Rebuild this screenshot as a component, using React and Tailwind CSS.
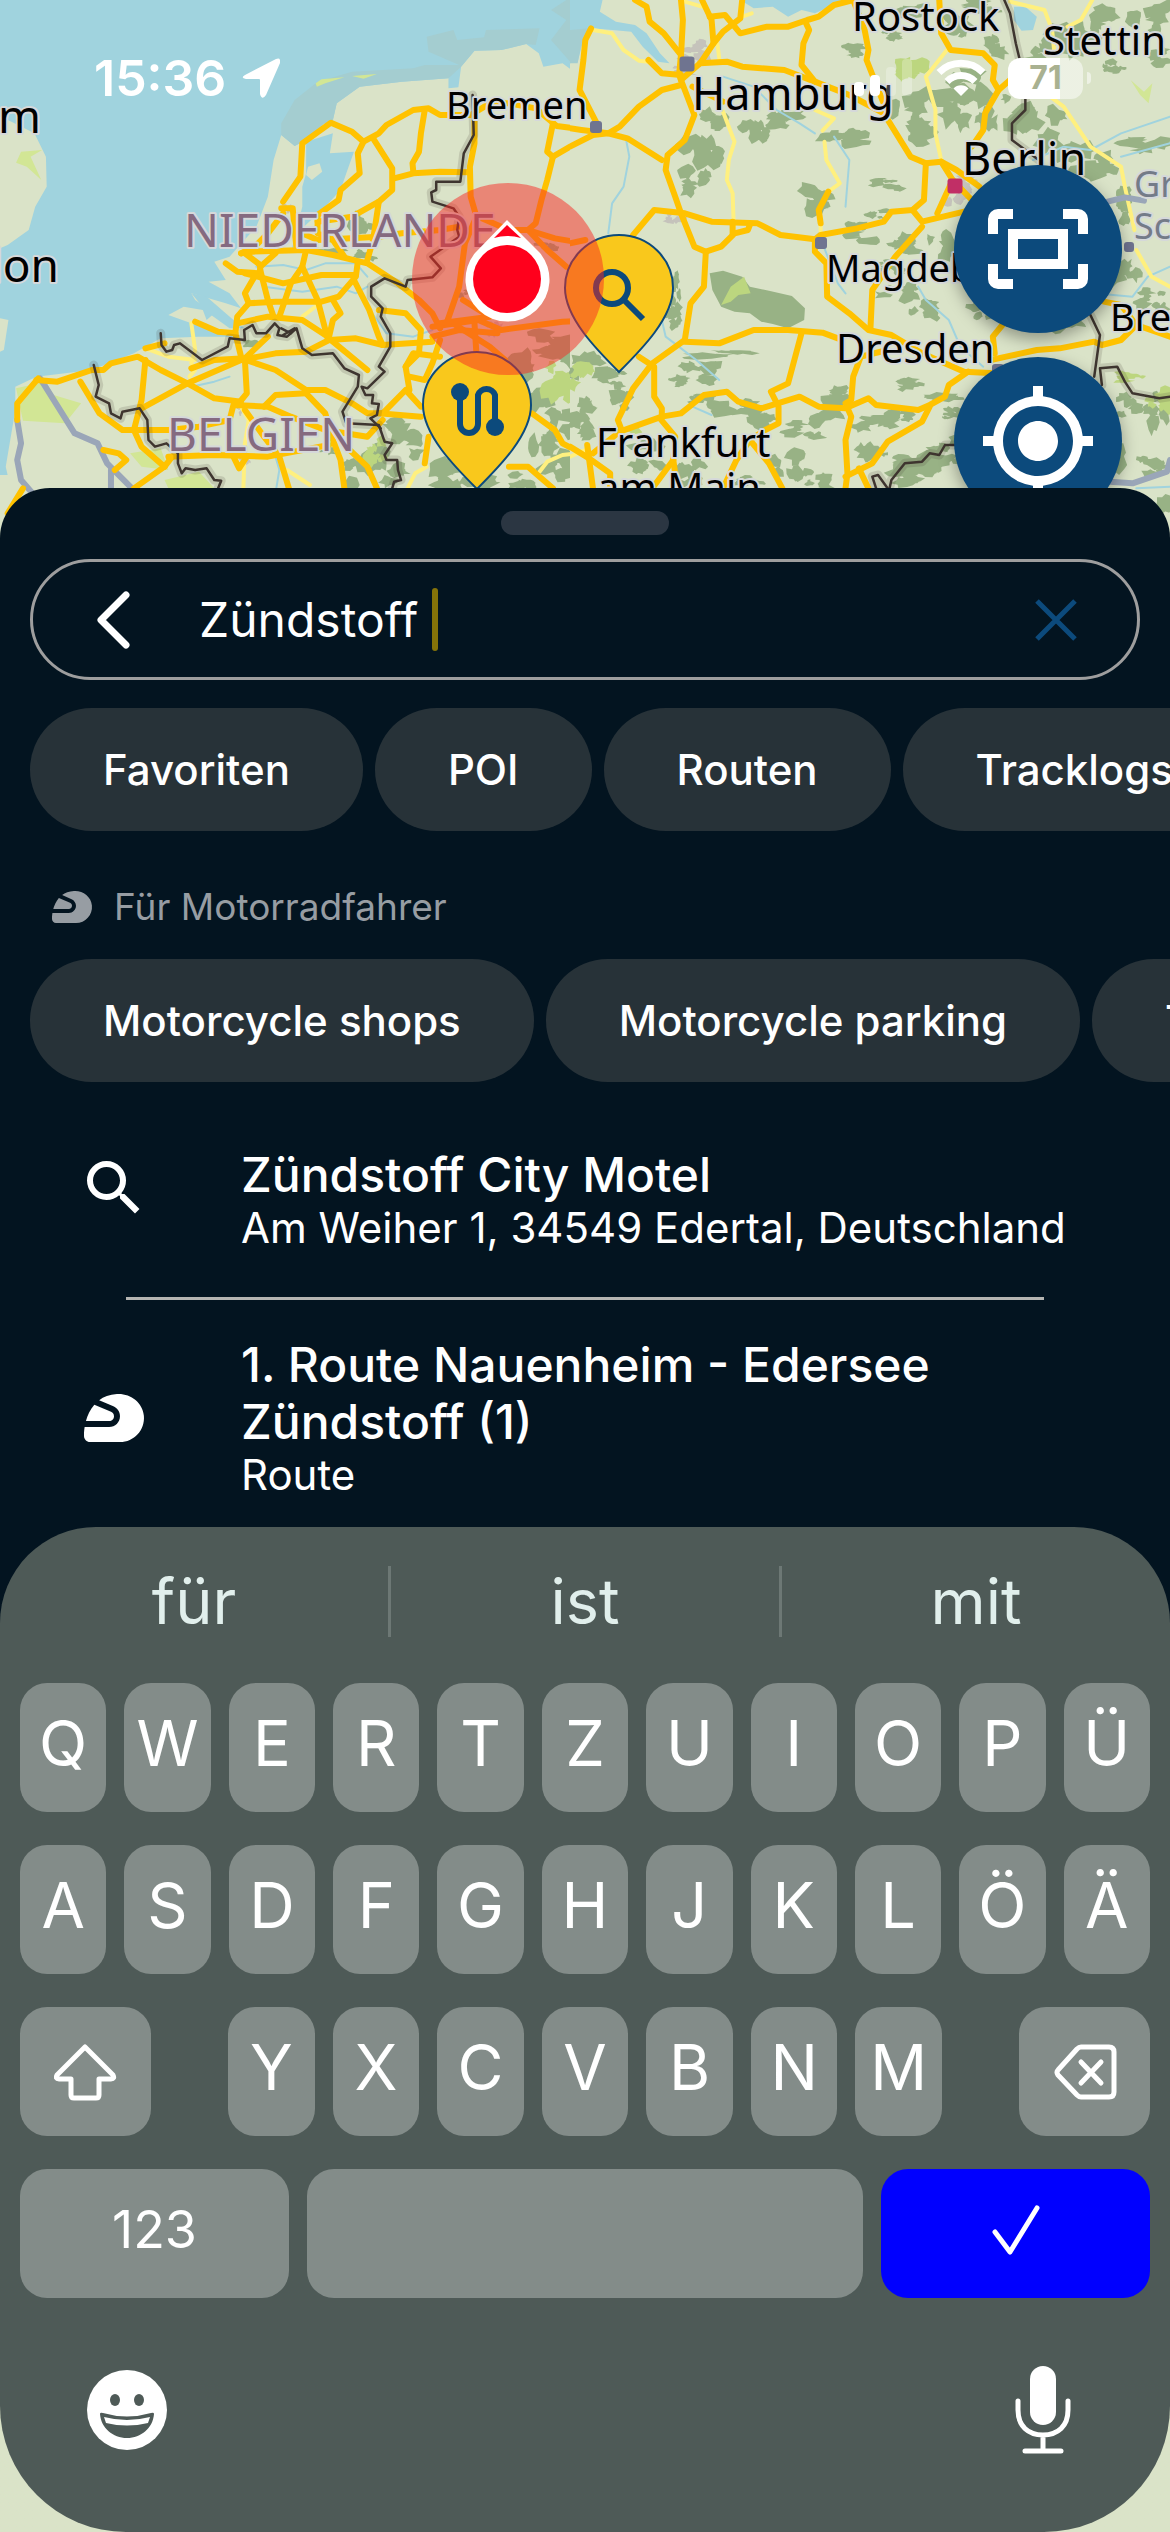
import React, { useState } from "react";
import { MdMyLocation, MdSearch, MdSportsMotorsports } from "react-icons/md";

const filters = ["Favoriten", "POI", "Routen", "Tracklogs"];
const riderFilters = ["Motorcycle shops", "Motorcycle parking", "Tankstellen"];

const results = [
  {
    title: "Zündstoff City Motel",
    subtitle: "Am Weiher 1, 34549 Edertal, Deutschland",
    icon: MdSearch,
    align: "items-start",
  },
  {
    title: "1. Route Nauenheim - Edersee Zündstoff (1)",
    subtitle: "Route",
    icon: MdSportsMotorsports,
    align: "items-center",
  },
];

const suggestions = ["für", "ist", "mit"];
const topRow = ["Q", "W", "E", "R", "T", "Z", "U", "I", "O", "P", "Ü"];
const homeRow = ["A", "S", "D", "F", "G", "H", "J", "K", "L", "Ö", "Ä"];
const bottomRow = ["Y", "X", "C", "V", "B", "N", "M"];

// Map tiles, every tile has its own 1568 x 1635 grid
const westTile = {
  water: [
    "0,0 1568,0 1568,80 1525,70 1500,110 1510,180 1500,215 1470,190 1420,200 1408,160 1375,132 1310,150 1240,152 1205,200 1198,262 1172,265 1172,235 1050,245 940,260 880,310 870,360 845,372 800,420 770,438 735,405 715,480 700,590 670,680 600,770 560,785 590,840 545,845 600,880 630,925 590,910 500,880 510,900 560,940 540,960 530,930 480,920 440,945 500,970 580,1000 610,1010 520,1010 420,1015 350,1060 240,1110 95,1130 40,1160 40,1230 15,1400 20,1425 0,1425",
    "800,425 870,400 862,460 925,455 905,520 890,570 850,620 790,685 760,760 790,620 790,560 800,520",
    "500,880 540,890 620,970 640,985 600,985 540,935",
  ],
  shallows: [
    "1115,110 1185,90 1195,120 1265,112 1270,90 1410,85 1400,135 1375,132 1310,150 1240,152 1205,200 1172,235 1050,245 940,260 880,310 870,360 845,372 800,420 770,438 735,405 735,370 770,300 830,245 920,215 1080,205 1110,195 1200,195 1120,155",
    "1480,0 1568,0 1568,70 1525,70 1500,110 1505,205 1440,120 1480,60 1440,30",
  ],
  islands: [
    "0,350 30,365 90,400 120,470 122,560 92,620 75,690 20,735 0,745",
    "0,955 22,960 10,1050 0,1055",
    "805,500 835,490 842,515 815,540 800,525",
  ],
  meadow: [
    "825,250 840,238 900,232 850,250 828,260",
    "920,228 985,222 950,236",
    "55,455 110,450 80,470 108,540 70,500 42,488",
    "42,1165 120,1145 140,1185 212,1210 170,1270 60,1262",
    "340,1360 420,1345 440,1410 370,1400",
    "430,1440 520,1415 560,1465 440,1465",
  ],
  forest: [
    [945, 675, 38, 40], [960, 765, 34, 20], [870, 752, 36, 12], [665, 1030, 26, 12],
    [1040, 1320, 60, 60], [1020, 1420, 50, 40], [930, 1420, 50, 60], [1180, 1420, 60, 50], [1250, 1440, 50, 30],
    [1430, 1040, 90, 50], [1380, 1100, 50, 60], [1510, 1060, 60, 60], [1430, 1210, 60, 50], [1540, 1170, 40, 60],
    [1500, 1270, 60, 50], [1420, 1300, 40, 60], [1480, 1400, 60, 50], [1380, 1440, 40, 24],
    [1210, 880, 14, 12], [1430, 740, 30, 14], [850, 1350, 24, 12],
  ],
  lightForest: [[1460, 1150, 50, 60], [980, 1350, 26, 34], [1540, 1110, 26, 30]],
  urban: [[625, 1225, 16, 24], [750, 630, 14, 16], [640, 1385, 18, 12], [1290, 990, 20, 20]],
  rivers: [
    "670,800 740,795 800,810 850,790 930,790 960,830",
    "690,860 790,875 880,860 930,880 960,860",
    "960,920 985,960 1010,1000 1080,1010 1130,990",
    "500,1160 560,1145 600,1130",
    "720,1370 730,1410 722,1465",
  ],
  minor: [
    "500,970 510,1050 500,1090 510,1110 495,1130",
    "380,1045 440,1070 510,1080",
    "790,950 830,915",
    "630,1220 650,1260 640,1330 636,1465",
    "750,1410 810,1455",
    "1065,1465 1085,1420 1115,1400",
    "1410,1415 1430,1385 1470,1365 1510,1360",
  ],
  roads: [
    "740,605 785,530 790,430 865,368 920,395 950,425 935,460 940,520 890,570 885,600 830,645",
    "950,425 990,400 1010,375 1080,330 1120,325 1150,345 1230,345 1280,310 1330,310 1400,325 1455,378 1500,385 1568,410",
    "1445,370 1430,455 1445,470 1490,440 1568,405",
    "975,415 1025,505 1025,570 990,605 920,650 830,665",
    "1110,330 1100,400 1095,455 1078,490 1080,515",
    "1030,535 1080,520 1150,515 1225,517",
    "1240,350 1240,430 1228,500 1230,590 1245,650 1215,730 1200,860 1170,960",
    "1445,470 1430,540 1415,600 1400,670 1380,690 1450,715 1500,725 1568,710",
    "1545,85 1530,120 1525,190 1512,230 1515,290 1555,370",
    "735,625 765,625 770,690 775,745",
    "740,640 700,700 670,735 630,760",
    "990,605 975,720 960,780",
    "630,760 660,755 800,750 870,765 960,790 1040,850 1095,900 1130,940 1150,985",
    "590,790 620,815 680,820 680,795 640,760",
    "680,800 720,760",
    "800,750 790,800 830,900 855,1010",
    "790,800 760,850 730,950",
    "640,820 740,850 840,825 930,825",
    "680,810 700,900 715,950",
    "665,830 640,880 650,910 620,950 615,1000",
    "650,910 720,905 840,905 885,890 930,830 935,785",
    "870,900 890,940 870,960 860,1010",
    "925,840 965,930 990,1010 1000,1035",
    "510,965 570,995 615,1000",
    "620,970 700,950 790,960 850,1005 870,1025 960,1110",
    "830,645 830,700 870,720 900,770",
    "770,690 830,720 990,710 1050,700 1150,690 1200,680",
    "380,1045 430,1030",
    "95,1140 150,1145 240,1110 270,1110 290,1090 360,1070 420,1110 490,1150 560,1195 630,1205",
    "45,1260 45,1210 100,1135",
    "490,1150 630,1080 720,1060 800,1055 860,1020 930,1015 1000,1035 1130,1025",
    "630,1075 720,1110 800,1170 850,1170 920,1210 960,1240 1000,1240",
    "380,1080 370,1200 350,1290 370,1340 430,1400",
    "370,1225 490,1150",
    "640,1080 645,1180 620,1215",
    "500,1105 560,1080 640,1075 700,1010",
    "615,1000 630,1070",
    "210,1145 260,1240 320,1290 440,1290 520,1280 600,1260 610,1215 700,1220 760,1250 850,1290 960,1310 1000,1260",
    "690,1220 720,1185 800,1180",
    "640,1230 690,1310 730,1370 755,1465",
    "440,1370 560,1365 700,1370 860,1335",
    "350,1465 430,1400 450,1370",
    "800,1180 850,1240 870,1320 890,1380 900,1465",
    "990,1240 1100,1250",
    "900,1335 960,1400 985,1465",
    "1000,1240 1060,1170 1100,1220",
    "990,930 1060,940 1100,990 1095,1060 1060,1100 1070,1170",
    "1060,1100 1080,1060 1150,1070",
    "1070,1130 1110,1140 1130,1090 1150,1020",
    "1130,980 1250,960 1310,990 1470,965 1568,960",
    "1130,1010 1200,990 1300,1000",
    "1170,960 1280,1040 1320,1080",
    "1240,970 1245,1060",
    "1150,970 1280,950 1210,900",
    "1250,650 1330,690 1380,690",
    "1380,690 1430,750 1480,800",
    "1390,1240 1450,1290 1470,1330 1520,1360 1568,1390",
    "1540,1340 1545,1465",
    "1110,1390 1120,1310",
    "1330,1400 1380,1400 1410,1430 1445,1465",
    "270,1350 310,1360 330,1380 300,1410",
    "610,1370 625,1405 645,1370",
    "60,1465 20,1540",
  ],
  foreign: [
    "105,1135 195,1300 255,1330 280,1390 345,1465",
    "45,1260 55,1330 45,1380 55,1440 100,1500",
    "290,1410 290,1465",
  ],
  borders: [
    "420,1000 422,1035 435,1055 450,1050 455,1035 470,1030 528,1080 595,1040 600,1015 640,1020 638,990 660,975 670,1000 695,1000 718,970 730,985 725,1005 750,1010 775,985 790,1045 815,1065 870,1060 900,1105 938,1125 935,1160 895,1235 905,1270 990,1275 1005,1325 1025,1330 1005,1365 1010,1380 1038,1380 1040,1410 1048,1440 1030,1445 1025,1465",
    "1235,285 1238,405 1212,460 1203,545 1140,545 1140,570 1127,577 1130,605 1185,625 1200,650 1195,690 1200,710 1125,770 1152,805 1130,832 1065,840 1060,860 1005,835 970,860 970,890 1000,925 995,950 1020,1000 1020,1040 990,1100 1005,1115 960,1165 945,1160 955,1185 975,1185 972,1210 990,1212 985,1245 968,1255 995,1285",
    "245,1095 258,1155 250,1190 285,1210 290,1240 315,1255 320,1235 365,1225 385,1260 388,1320 405,1340 435,1330 465,1360 465,1390 475,1420 485,1405 510,1410 540,1405 560,1440 578,1442 570,1465",
    "735,985 760,1000 770,985 740,1005",
  ],
};

const eastTile = {
  water: [
    "0,0 85,0 78,35 120,65 170,75 200,100 235,160 260,190 230,185 190,140 160,95 110,90 55,85 35,120 20,185 0,190",
    "445,0 740,0 690,15 640,40 605,30 570,50 530,20 480,25",
    "1160,20 1190,20 1220,50 1210,90 1180,92 1160,60",
  ],
  shallows: ["0,90 50,85 30,130 20,190 0,190"],
  islands: [],
  meadow: ["1465,240 1500,275 1522,250 1512,310 1490,285"],
  forest: [
    [340, 450, 60, 60], [330, 540, 40, 40], [370, 370, 40, 40], [480, 390, 40, 40], [570, 360, 50, 26],
    [700, 410, 60, 30], [740, 150, 46, 22], [900, 40, 60, 24], [1010, 60, 50, 50], [1100, 130, 40, 40],
    [1060, 20, 60, 20], [840, 110, 30, 16], [870, 330, 60, 70], [1010, 250, 70, 60], [900, 400, 50, 40],
    [1000, 330, 40, 60], [1090, 330, 40, 60], [1230, 380, 60, 60], [1320, 480, 70, 50], [1300, 130, 60, 60],
    [1500, 60, 60, 60], [1400, 60, 40, 40], [1220, 160, 40, 40], [1420, 200, 30, 20], [1500, 430, 70, 30],
    [640, 600, 50, 46], [835, 550, 40, 18], [760, 700, 60, 34], [800, 640, 30, 16], [850, 880, 50, 30],
    [920, 930, 40, 30], [970, 760, 40, 60], [880, 730, 50, 30], [1080, 930, 30, 30], [1360, 860, 60, 40],
    [1440, 800, 50, 50], [1520, 900, 40, 30], [1290, 960, 60, 30], [280, 870, 18, 50], [270, 960, 24, 40],
    [60, 1090, 60, 40], [120, 1140, 50, 30], [150, 1190, 40, 40], [60, 1220, 40, 40], [30, 1270, 34, 40],
    [330, 1120, 44, 30], [400, 1060, 80, 14], [430, 1220, 60, 30], [500, 1260, 40, 34], [340, 1190, 40, 20],
    [300, 1140, 40, 20], [660, 1230, 60, 40], [610, 1290, 50, 24], [570, 1400, 50, 50], [640, 1440, 40, 30],
    [300, 1420, 50, 40], [210, 1410, 40, 30], [470, 1440, 40, 20], [800, 1270, 50, 26], [860, 1250, 40, 24],
    [790, 1350, 40, 30], [920, 1400, 80, 40], [980, 1350, 60, 40], [1000, 1240, 34, 20], [900, 1150, 40, 20],
    [960, 1190, 50, 16], [690, 1180, 30, 20], [1480, 1220, 50, 40], [1420, 1350, 40, 60], [1520, 1400, 40, 30],
    [1540, 1240, 26, 60], [1550, 1540, 30, 40], [200, 1330, 40, 20], [860, 1440, 50, 26], [830, 800, 40, 20],
    [1180, 330, 50, 50], [1390, 500, 50, 40], [1520, 160, 40, 30], [1360, 110, 40, 60], [1450, 620, 30, 60],
  ],
  lightForest: [[880, 220, 44, 40], [30, 1130, 36, 44], [1540, 1200, 40, 40], [1470, 1130, 40, 16], [160, 1290, 20, 14]],
  urban: [[320, 160, 34, 34], [300, 210, 40, 16], [1010, 570, 50, 44], [275, 650, 26, 20], [1050, 540, 30, 20]],
  rivers: [
    "145,410 155,470 140,560 110,610 100,700",
    "400,230 480,260 540,330 600,370 640,400",
    "690,410 730,480 720,620",
    "650,700 680,790 700,850 720,880",
    "910,860 930,900 990,960 1020,1040 1080,1100",
    "1210,480 1290,440 1360,450 1440,400 1568,350",
    "1440,470 1568,430",
    "240,960 250,1010 330,1080 390,1140",
    "320,1220 370,1245",
    "1370,880 1470,890 1510,830 1568,800",
    "1480,1465 1568,1460",
  ],
  minor: [
    "60,90 110,100 140,150 180,182 205,185",
    "400,335 430,425 415,480 410,540 425,580 428,680",
    "640,330 690,355 660,392",
    "665,425 670,480 705,550 675,575",
    "655,650 655,700",
    "985,150 930,230 955,330 955,400 970,480",
    "1255,290 1290,320 1360,440 1440,500 1450,560 1475,690",
    "1480,750 1520,830 1568,860",
    "1150,5 1240,30 1260,90 1265,150",
    "1365,0 1335,60 1300,80",
    "385,130 390,175",
    "300,5 345,20",
    "450,50 475,40",
    "0,1370 40,1350",
  ],
  roads: [
    "170,0 200,20 208,65 245,100 290,165 285,225 325,345 300,420 255,465 250,510 275,590 290,640 325,740 355,755 350,860 315,910 300,1020 215,1090 165,1165 125,1260 135,1290 60,1360",
    "290,0 295,60 290,170",
    "345,0 370,60 375,130 340,190 290,240",
    "450,0 445,55 400,95 375,130",
    "365,50 405,45 445,100 515,80 570,80 620,60 650,50 690,15 740,0",
    "615,65 625,90 610,130 605,195 640,245 730,285 820,340 890,470 930,490 970,485 1010,510 1070,560",
    "340,190 410,185 450,200 560,210 640,245",
    "205,180 240,220 290,225",
    "290,255 240,270 180,320 130,380 100,400 30,390 0,385",
    "320,260 400,305",
    "0,440 60,405 100,400 150,415 240,480",
    "55,85 40,120 35,180 25,270 70,370",
    "740,0 770,90 780,150 775,180 830,340",
    "965,0 970,100 995,150 1080,160 1110,195 1105,240 1120,270 1085,340 1080,390 1050,440",
    "1120,270 1150,240",
    "930,490 925,600 895,630 840,635 820,665 750,685 655,705 640,718 550,705 490,670 370,665 300,640 220,630 165,705",
    "895,630 920,665 1030,635",
    "1000,540 960,640",
    "970,485 1000,540 1050,600",
    "920,680 850,770 790,870 785,990",
    "640,720 640,755 670,790 672,890 730,940 780,990 840,1005 920,1060 1030,1115 1110,1120",
    "300,1025 390,1030 480,990 570,990 660,998 700,1015",
    "605,1000 570,1150 525,1175 545,1220 545,1270 510,1290 470,1320",
    "830,1050 760,1070 740,1130 735,1200 720,1210 735,1250 720,1320 725,1420 720,1465",
    "180,1070 220,1100 220,1190 240,1225 240,1250",
    "130,1295 240,1250 290,1240 350,1185 410,1175 440,1205 500,1225 600,1190 650,1220 720,1225 780,1195 800,1215 910,1230 940,1215 980,1190 990,1155 1040,1115",
    "940,1220 920,1265 830,1325 790,1390 720,1430",
    "755,1405 780,1465",
    "1100,1080 1140,1070 1220,1050 1280,1045 1370,1025 1390,1035 1440,1020 1480,975 1568,1010",
    "1110,1060 1105,1010 1130,975",
    "1395,905 1440,915 1480,975",
    "235,1255 275,1310 270,1380 215,1465",
    "270,1380 280,1465",
    "470,1320 520,1390 555,1465",
    "470,1320 435,1380 400,1465",
    "0,1340 50,1375 105,1420 105,1465",
    "45,1335 60,1465",
    "355,755 395,740 430,700 465,690 470,675",
    "425,665 425,700",
    "675,575 650,630 655,670",
    "0,730 40,720",
  ],
  foreign: ["1410,1445 1470,1450 1560,1415 1568,1380", "1405,605 1450,592 1500,602"],
  borders: [
    "1135,0 1150,40 1165,130 1190,250 1190,330 1155,370 1155,420 1225,480",
    "1360,945 1385,1005 1370,1130",
    "1390,1155 1385,1105 1430,1100 1450,1145 1470,1180 1540,1195 1568,1190",
    "1005,1335 980,1335 965,1365 940,1360 920,1385 875,1390 840,1440 835,1465",
    "830,1465 805,1425 790,1430 800,1465",
  ],
};

const places = [
  { name: "Bremen", x: 446, y: 119, size: 38 },
  { name: "Hamburg", x: 692, y: 110, size: 45 },
  { name: "Rostock", x: 852, y: 31, size: 40 },
  { name: "Stettin", x: 1043, y: 55, size: 40 },
  { name: "Berlin", x: 962, y: 175, size: 45 },
  { name: "Magdeburg", x: 826, y: 282, size: 38 },
  { name: "Dresden", x: 836, y: 363, size: 40 },
  { name: "Breslau", x: 1110, y: 331, size: 38 },
  { name: "Frankfurt", x: 596, y: 457, size: 40 },
  { name: "am Main", x: 597, y: 502, size: 40 },
];

const cities = [
  { x: 596, y: 127, size: 12, color: "#6f7490" },
  { x: 687, y: 64, size: 15, color: "#6f7490" },
  { x: 821, y: 243, size: 12, color: "#6f7490" },
  { x: 955, y: 186, size: 15, color: "#c12f66" },
  { x: 1129, y: 247, size: 10, color: "#6f7490" },
  { x: 998, y: 370, size: 12, color: "#6f7490" },
];

const noise = (n) => {
  const v = Math.sin(n * 12.9898) * 43758.5453;
  return v - Math.floor(v);
};

// Cluster of ragged pieces round a centre, the same for the same input
function patch([cx, cy, rx, ry]) {
  let d = "";
  for (let piece = 0; piece < 6; piece++) {
    const seed = cx * 3 + cy * 7 + piece * 31;
    const px = cx + (noise(seed) - 0.5) * rx * 1.6;
    const py = cy + (noise(seed + 1) - 0.5) * ry * 1.6;
    const scale = 0.3 + noise(seed + 2) * 0.45;
    for (let i = 0; i < 11; i++) {
      const angle = ((i + noise(seed + i * 5) * 0.7) / 11) * Math.PI * 2;
      const r = scale * (0.45 + noise(seed + i * 9 + 4) * 0.75);
      const x = Math.round(px + Math.cos(angle) * rx * r);
      const y = Math.round(py + Math.sin(angle) * ry * r);
      d += `${i === 0 ? "M" : "L"}${x} ${y}`;
    }
    d += "Z";
  }
  return d;
}

const Areas = ({ shapes, fill }) =>
  shapes.map((points, i) => <polygon key={i} points={points} fill={fill} />);

const Patches = ({ shapes, fill }) => (
  <path d={shapes.map(patch).join("")} fill={fill} />
);

const Lines = ({ shapes, color, width, opacity = 1 }) => (
  <g
    fill="none"
    stroke={color}
    strokeWidth={width}
    strokeLinejoin="round"
    strokeLinecap="round"
    opacity={opacity}
  >
    {shapes.map((points, i) => (
      <polyline key={i} points={points} vectorEffect="non-scaling-stroke" />
    ))}
  </g>
);

const Tile = ({ x, data, children }) => (
  <svg
    x={x}
    y="0"
    width="600"
    height="545"
    viewBox="0 0 1568 1635"
    preserveAspectRatio="none"
  >
    <rect width="1568" height="1635" fill="#dae3c8" />
    <Areas shapes={data.water} fill="#a0d3de" />
    <Areas shapes={data.shallows} fill="#a4cdd0" />
    <Areas shapes={data.islands} fill="#dae3c8" />
    <Areas shapes={data.meadow} fill="#d2e695" />
    {children}
    <Patches shapes={data.forest} fill="#98b285" />
    <Patches shapes={data.lightForest} fill="#bcd67f" />
    <Patches shapes={data.urban} fill="#c5c3bb" />
    <Lines shapes={data.rivers} color="#a0d3de" width={2} />
    <Lines shapes={data.minor} color="#fff07f" width={4} />
    <Lines shapes={data.foreign} color="#9aa6b8" width={6} />
    <Lines shapes={data.roads} color="#ffc200" width={6} />
    <Lines shapes={data.borders} color="#3e352f" width={9} opacity={0.15} />
    <Lines shapes={data.borders} color="#3e352f" width={2.5} />
  </svg>
);

const Pin = ({ x, y, children }) => (
  <g transform={`translate(${x} ${y})`}>
    <path
      d="M0 0C-22 -22 -54 -54 -54 -84A54 53 0 0 1 54 -84C54 -54 22 -22 0 0Z"
      fill="#f9c81c"
      stroke="#0c4a7c"
      strokeWidth="2"
    />
    {children}
  </g>
);

const RouteMap = () => (
  <svg
    className="absolute inset-0 w-full h-full"
    viewBox="0 0 1170 545"
    preserveAspectRatio="xMinYMin slice"
    fontFamily="'Noto Sans', sans-serif"
  >
    <Tile x={0} data={westTile} />
    <Tile x={570} data={eastTile}>
      {/* Harz */}
      <path
        d="M365 820L400 812L450 830L470 860L520 872L580 888L614 925L612 960L570 985L530 972L500 965L470 940L430 935L395 920L372 870Z"
        fill="#98b285"
      />
      <path d="M395 915L420 860L455 830L472 880L440 885L420 905Z" fill="#bcd67f" />
    </Tile>

    {cities.map((c) => (
      <rect
        key={c.x}
        x={c.x - c.size / 2}
        y={c.y - c.size / 2}
        width={c.size}
        height={c.size}
        rx="3"
        fill={c.color}
      />
    ))}

    <g stroke="#d5d8da" strokeWidth="4" strokeLinejoin="round" paintOrder="stroke">
      <text x="41" y="133" fontSize="46" textAnchor="end">
        Birmingham
      </text>
      <text x="59" y="282" fontSize="46" textAnchor="end">
        London
      </text>
      {places.map((p) => (
        <text key={p.name} x={p.x} y={p.y} fontSize={p.size}>
          {p.name}
        </text>
      ))}
      <g fontSize="36" fill="#747b88">
        <text x="1134" y="197">Grünberg</text>
        <text x="1134" y="239">Schlesien</text>
      </g>
      <g fontSize="46" fill="#856a80">
        <text x="184" y="247">NIEDERLANDE</text>
        <text x="167" y="451">BELGIEN</text>
      </g>
    </g>

    <Pin x={477} y={489}>
      <g fill="none" stroke="#0c4a7c" strokeWidth="6">
        <path d="M-17 -97V-65a9 9 0 0 0 18 0V-94a9 9 0 0 1 17 0V-62" />
      </g>
      <circle cx="-17" cy="-97" r="9" fill="#0c4a7c" />
      <circle cx="18" cy="-62" r="9" fill="#0c4a7c" />
    </Pin>
    <Pin x={619} y={372}>
      <g fill="none" stroke="#0c4a7c" strokeWidth="6">
        <circle cx="-7" cy="-84" r="16" />
        <path d="M5 -72L24 -53" />
      </g>
    </Pin>

    {/* Current position */}
    <circle cx="508" cy="279" r="96" fill="#f82a24" opacity="0.5" />
    <path d="M507 220L540 253A42 42 0 1 1 475 253Z" fill="#fff" />
    <path d="M507 225L521 238Q507 234 494 238Z" fill="#ff001c" />
    <circle cx="507" cy="279" r="34" fill="#ff001c" />
  </svg>
);

const StatusBar = () => (
  <div className="relative flex items-center justify-between pt-[50px] pl-[94px] pr-[79px] text-white">
    <div className="flex items-center gap-4">
      <span className="text-[50px] leading-[56px] font-semibold">15:36</span>
      <svg className="w-[38px] h-[40px]" viewBox="0 0 38 40" fill="currentColor">
        <path d="M3 17L34 1q5 -2 4 4L24 37q-4 6 -6 -1V22q0 -1 -1 -1H4q-6 -1 -1 -4z" />
      </svg>
    </div>
    <div className="flex items-center gap-[22px]">
      <svg className="w-[60px] h-[40px]" viewBox="0 0 60 40" fill="currentColor">
        <rect x="0" y="24" width="10" height="14" rx="4" />
        <rect x="16" y="17" width="10" height="21" rx="4" />
        <rect x="32" y="9" width="10" height="29" rx="4" opacity="0.25" />
        <rect x="48" y="1" width="10" height="37" rx="4" opacity="0.25" />
      </svg>
      <svg className="w-[50px] h-[38px]" viewBox="0 0 50 38" fill="none" stroke="currentColor" strokeWidth="7">
        <path d="M3 13.500a31 31 0 0 1 44 0" />
        <path d="M11 22.500a19.500 19.500 0 0 1 28 0" />
        <path d="M25 37l-7.500 -7.500a10.500 10.500 0 0 1 15 0z" fill="currentColor" stroke="none" />
      </svg>
      <div className="flex items-center gap-1">
        <div className="flex items-center justify-center w-[75px] h-[41px] rounded-xl bg-linear-to-r from-white from-70% to-white/50 to-70%">
          <span className="text-[32px] leading-[40px] font-bold text-[#a9b191]">71</span>
        </div>
        <div className="w-1 h-3 rounded-r-full bg-white/50" />
      </div>
    </div>
  </div>
);

const MapButton = ({ label, children }) => (
  <button
    type="button"
    aria-label={label}
    className="flex items-center justify-center size-[168px] rounded-full bg-[#0c4a7c] text-white shadow-[0_6px_16px_rgba(0,0,0,0.35)]"
  >
    {children}
  </button>
);

const Chips = ({ items }) => (
  <div className="flex gap-3 pl-[30px] overflow-hidden">
    {items.map((item) => (
      <button
        key={item}
        type="button"
        className="shrink-0 h-[123px] px-[73px] rounded-full bg-[#273238] text-[42px] leading-[50px] font-medium whitespace-nowrap"
      >
        {item}
      </button>
    ))}
  </div>
);

const Key = ({ label, className = "flex-1", children }) => (
  <button
    type="button"
    aria-label={label}
    className={`flex items-center justify-center min-w-0 h-[129px] pb-2 rounded-[27px] bg-[#838c89] text-[63px] text-white ${className}`}
  >
    {children}
  </button>
);

const Keyboard = () => (
  <div className="bg-linear-to-b from-[#031420] from-50% to-[#dae3c8] to-50%">
    <div className="pb-[78px] rounded-t-[96px] rounded-b-[126px] bg-[#4e5a57]">
      <div className="flex h-[156px] pt-[39px] pb-[46px] divide-x-3 divide-[#6d7875]">
        {suggestions.map((word) => (
          <button
            key={word}
            type="button"
            className="flex flex-1 items-center justify-center text-[63px] leading-[71px] text-[#e1efec]"
          >
            {word}
          </button>
        ))}
      </div>

      <div className="flex flex-col gap-[33px] px-5">
        <div className="flex gap-[18px]">
          {topRow.map((k) => (
            <Key key={k}>{k}</Key>
          ))}
        </div>
        <div className="flex gap-[18px]">
          {homeRow.map((k) => (
            <Key key={k}>{k}</Key>
          ))}
        </div>
        <div className="flex gap-[77px]">
          <Key label="Shift" className="w-[131px]">
            <svg className="w-[64px] h-[60px] mt-2" viewBox="0 0 64 60" fill="none" stroke="currentColor" strokeWidth="5" strokeLinejoin="round">
              <path d="M31 5L59 33q2 4 -2 4H45V53q0 3 -3 3H20q-3 0 -3 -3V37H5q-4 0 -2 -4z" />
            </svg>
          </Key>
          <div className="flex flex-1 gap-[18px]">
            {bottomRow.map((k) => (
              <Key key={k}>{k}</Key>
            ))}
          </div>
          <Key label="Löschen" className="w-[131px]">
            <svg className="w-[64px] h-[60px] mt-2" viewBox="0 0 64 60" fill="none" stroke="currentColor" strokeWidth="5" strokeLinejoin="round" strokeLinecap="round">
              <path d="M28 5H56q5 0 5 5V50q0 5 -5 5H28q-2 0 -4 -2L5 33q-2 -3 0 -5L24 7q2 -2 4 -2z" />
              <path d="M28 20L48 41M48 20L28 41" />
            </svg>
          </Key>
        </div>
        <div className="grid grid-cols-[269px_1fr_269px] gap-[18px]">
          <Key className="w-full">
            <span className="text-[52px]">123</span>
          </Key>
          <Key label="Leerzeichen" className="w-full" />
          <button
            type="button"
            aria-label="Fertig"
            className="flex items-center justify-center h-[129px] pb-2 rounded-[27px] bg-[#0000ff] text-white"
          >
            <svg className="w-[52px] h-[52px]" viewBox="0 0 52 52" fill="none" stroke="currentColor" strokeWidth="5" strokeLinecap="round" strokeLinejoin="round">
              <path d="M5 28L20 48L47 4" />
            </svg>
          </button>
        </div>
      </div>

      <div className="flex items-center justify-between pt-[66px] px-[84px] text-white">
        <button type="button" aria-label="Emoji">
          <svg className="size-[86px]" viewBox="0 0 86 86">
            <circle cx="43" cy="44" r="40" fill="currentColor" />
            <g fill="#4e5a57">
              <ellipse cx="31" cy="34" rx="5" ry="6" />
              <ellipse cx="55" cy="34" rx="5" ry="6" />
              <path d="M16 48q0 -2 3 -1q24 7 48 0q3 -1 3 1C69 62 57 72 43 72S17 62 16 48z" />
            </g>
            <path d="M20 51q23 6 46 0l-2 6q-21 5 -42 0z" fill="currentColor" />
          </svg>
        </button>
        <button type="button" aria-label="Diktieren">
          <svg className="w-[86px] h-[90px]" viewBox="0 0 86 90" fill="none" stroke="currentColor" strokeWidth="5" strokeLinecap="round">
            <rect x="30" y="2" width="26" height="59" rx="13" fill="currentColor" stroke="none" />
            <path d="M18 37V46C18 62 28 71 43 71S68 62 68 46V37M43 71V86M25 87H61" />
          </svg>
        </button>
      </div>
    </div>
  </div>
);

const App = () => {
  const [query, setQuery] = useState("Zündstoff ");

  return (
    <div className="min-h-screen flex flex-col overflow-hidden bg-[#dae3c8] font-['Inter',sans-serif]">
      <header className="relative h-[545px]">
        <RouteMap />
        <StatusBar />
        <div className="absolute top-[165px] right-12 flex flex-col gap-6">
          <MapButton label="Karte einpassen">
            <svg className="size-[120px]" viewBox="0 0 24 24" fill="none" stroke="currentColor" strokeWidth="2">
              <path d="M3 9V6a1 1 0 0 1 1 -1h3M17 5h3a1 1 0 0 1 1 1v3M21 15v3a1 1 0 0 1 -1 1h-3M7 19H4a1 1 0 0 1 -1 -1v-3" />
              <rect x="7" y="9" width="10" height="6" />
            </svg>
          </MapButton>
          <MapButton label="Mein Standort">
            <MdMyLocation className="size-[120px]" />
          </MapButton>
        </div>
      </header>

      {/* Search sheet */}
      <main className="relative flex-1 -mt-[57px] pt-[23px] pb-[26px] rounded-t-[50px] bg-[#031420] text-white">
        <div className="w-[168px] h-6 mx-auto rounded-full bg-[#2b3642]" />

        <div className="flex items-center h-[121px] mt-6 mx-[30px] pl-[62px] pr-[58px] border-3 border-[#9e9e9e] rounded-full">
          <button type="button" aria-label="Zurück">
            <svg className="w-[40px] h-[60px]" viewBox="0 0 40 60" fill="none" stroke="currentColor" strokeWidth="7" strokeLinecap="round" strokeLinejoin="round">
              <path d="M31 5L6 30L31 55" />
            </svg>
          </button>
          <input
            type="text"
            aria-label="Suche"
            value={query}
            onChange={(e) => setQuery(e.target.value)}
            className="[field-sizing:content] ml-[64px] text-[48px] leading-[60px] bg-transparent outline-none"
          />
          <span className="w-[6px] h-[63px] rounded-full bg-[#857309]" />
          <button type="button" aria-label="Eingabe löschen" className="ml-auto text-[#0c4a7c]">
            <svg className="size-[46px]" viewBox="0 0 46 46" fill="none" stroke="currentColor" strokeWidth="5">
              <path d="M4 4L42 42M42 4L4 42" />
            </svg>
          </button>
        </div>

        <div className="mt-7">
          <Chips items={filters} />
        </div>

        <div className="flex items-center gap-[18px] mt-[52px] pl-12 text-[#979da3]">
          <MdSportsMotorsports className="size-12" />
          <h2 className="text-[37px] leading-[48px]">Für Motorradfahrer</h2>
        </div>

        <div className="mt-7">
          <Chips items={riderFilters} />
        </div>

        <ul className="mt-[64px]">
          {results.map((r, i) => (
            <li key={r.title}>
              {i > 0 && <hr className="mt-11 mb-9 mx-[126px] border-t-3 border-[#b5b5b2]" />}
              <a href="#" className={`flex gap-[91px] pl-[78px] pr-[90px] ${r.align}`}>
                <span className="flex items-center shrink-0 h-[84px]">
                  <r.icon className="size-[72px]" />
                </span>
                <span className="flex flex-col">
                  <span className="text-[48px] leading-[57px] font-medium">{r.title}</span>
                  <span className="text-[42px] leading-[50px]">{r.subtitle}</span>
                </span>
              </a>
            </li>
          ))}
        </ul>
      </main>

      <Keyboard />
    </div>
  );
};

export default App;
